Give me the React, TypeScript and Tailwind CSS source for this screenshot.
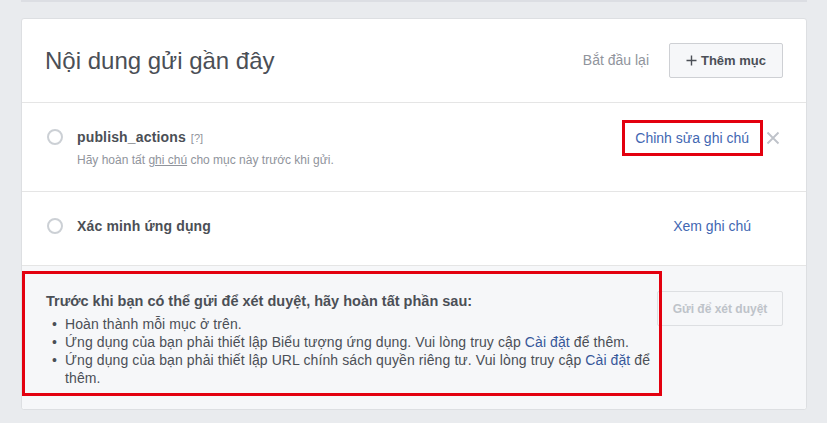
import React from "react";

function Circle() {
  return <div className="w-[16px] h-[16px] rounded-full border-[2px] border-[#ccd0d5] bg-white shrink-0" />;
}

function XIcon() {
  return (
    <svg width="14" height="14" viewBox="0 0 14 14" className="shrink-0">
      <path d="M1.5 1.5 L12.5 12.5 M12.5 1.5 L1.5 12.5" stroke="#bec2c9" strokeWidth="1.8" fill="none" />
    </svg>
  );
}

export default function App() {
  return (
    <div
      className="w-[827px] h-[423px] bg-[#e9ebee] overflow-hidden"
      style={{ fontFamily: '"Liberation Sans", Arial, sans-serif' }}
    >
      <div className="ml-[21px] w-[786px] h-[2px] bg-[#dcdee3]" />
      <div className="mt-[16px] ml-[21px] w-[786px] bg-white border border-[#dddfe2] rounded-[3px]">
        {/* header */}
        <div className="h-[84px] flex items-center pl-[23px] pr-[23px] border-b border-[#e5e5e5]">
          <div className="text-[24px] text-[#4b4f56] leading-[28px] flex-1">Nội dung gửi gần đây</div>
          <div className="text-[14px] text-[#90949c] mr-[20px]">Bắt đầu lại</div>
          <button className="w-[114px] h-[35px] border border-[#ced0d4] bg-[#f6f7f9] rounded-[2px] flex items-center justify-center gap-[4px] text-[13px] font-bold text-[#4b4f56]">
            <svg width="11" height="11" viewBox="0 0 11 11">
              <path d="M5.5 0.5 V10.5 M0.5 5.5 H10.5" stroke="#4b4f56" strokeWidth="1.4" />
            </svg>
            <span>Thêm mục</span>
          </button>
        </div>
        {/* row 1 */}
        <div className="h-[89px] flex items-start pt-[25px] pl-[25px] pr-[26px] border-b border-[#e5e5e5]">
          <div className="mt-[1px]">
            <Circle />
          </div>
          <div className="ml-[14px] flex-1">
            <div className="flex items-baseline leading-[18px]">
              <span className="text-[14px] font-bold text-[#4b4f56] tracking-[0.15px]">publish_actions</span>
              <span className="text-[11px] text-[#90949c] ml-[5px]">[?]</span>
            </div>
            <div className="text-[12px] leading-[16px] text-[#90949c] mt-[5px]">
              Hãy hoàn tất <span className="underline">ghi chú</span> cho mục này trước khi gửi.
            </div>
          </div>
          <div className="flex items-center -mt-[8px]">
            <div className="border-[3px] border-[#e3000f] pl-[10px] pr-[11px] py-[6px] text-[14px] leading-[18px] text-[#4267b2]">
              Chỉnh sửa ghi chú
            </div>
            <div className="ml-[3px]">
              <XIcon />
            </div>
          </div>
        </div>
        {/* row 2 */}
        <div className="h-[74px] flex items-start pt-[25px] pl-[25px] pr-[55px] border-b border-[#e5e5e5]">
          <div className="mt-[1px]">
            <Circle />
          </div>
          <div className="ml-[14px] flex-1 text-[14px] font-bold text-[#4b4f56] leading-[18px] tracking-[0.15px]">
            Xác minh ứng dụng
          </div>
          <div className="text-[14px] leading-[18px] text-[#4267b2]">Xem ghi chú</div>
        </div>
        {/* footer */}
        <div className="h-[143px] bg-[#f6f7f9] flex items-start pt-[5px] pr-[23px] rounded-b-[3px]">
          <div className="relative z-10 w-[640px] h-[125px] shrink-0 border-[3px] border-[#e3000f] pl-[21px] pt-[18px] pr-[1px] text-[#4b4f56]">
            <div className="text-[14.5px] font-bold leading-[18px]">
              Trước khi bạn có thể gửi để xét duyệt, hãy hoàn tất phần sau:
            </div>
            <ul className="mt-[5px] text-[14px] leading-[18px] tracking-[0.1px]">
              <li className="flex">
                <span className="w-[19px] shrink-0 pl-[6px]">•</span>
                <span>Hoàn thành mỗi mục ở trên.</span>
              </li>
              <li className="flex">
                <span className="w-[19px] shrink-0 pl-[6px]">•</span>
                <p>
                  Ứng dụng của bạn phải thiết lập Biểu tượng ứng dụng. Vui lòng truy cập{" "}
                  <a className="text-[#365899]">Cài đặt</a> để thêm.
                </p>
              </li>
              <li className="flex">
                <span className="w-[19px] shrink-0 pl-[6px]">•</span>
                <p>
                  <span>Ứng dụng của bạn phải thiết lập URL chính sách quyền riêng tư. Vui lòng truy cập</span>{" "}
                  <a className="text-[#365899]">Cài đặt</a> <span>để</span> <span>thêm.</span>
                </p>
              </li>
            </ul>
          </div>
          <button className="ml-[-5px] mt-[20px] w-[126px] h-[35px] border border-[#dddfe2] bg-[#f6f7f9] rounded-[2px] text-[12px] font-bold text-[#bec3c9]">
            Gửi để xét duyệt
          </button>
        </div>
      </div>
    </div>
  );
}
